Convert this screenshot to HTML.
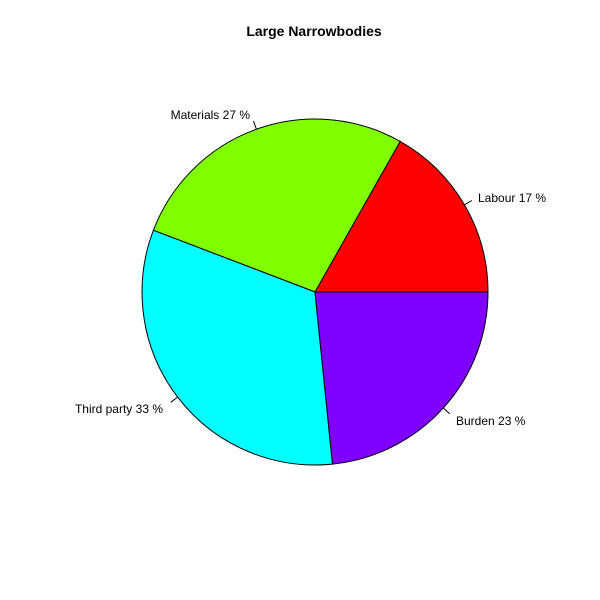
<!DOCTYPE html>
<html><head><meta charset="utf-8"><style>html,body{margin:0;padding:0;background:#fff}svg{display:block}</style></head>
<body>
<svg width="600" height="600" xmlns="http://www.w3.org/2000/svg" font-family="Liberation Sans, sans-serif">
<rect width="600" height="600" fill="#fff"/>
<text x="314" y="36" text-anchor="middle" font-weight="bold" font-size="14">Large Narrowbodies</text>
<g stroke="#000" stroke-width="1">
<path d="M315,292 L488,292 A173,173 0 0 0 400.2,141.4 Z" fill="#ff0000"/>
<path d="M315,292 L400.2,141.4 A173,173 0 0 0 153.4,230.3 Z" fill="#80ff00"/>
<path d="M315,292 L153.4,230.3 A173,173 0 0 0 332.5,464.1 Z" fill="#00ffff"/>
<path d="M315,292 L332.5,464.1 A173,173 0 0 0 488,292 Z" fill="#8000ff"/>
<line x1="464.4" y1="204.8" x2="471.9" y2="200.5"/>
<line x1="256.4" y1="129.2" x2="253.5" y2="121.1"/>
<line x1="177.6" y1="397.1" x2="170.7" y2="402.3"/>
<line x1="443.3" y1="408" x2="449.7" y2="413.8"/>
</g>
<g font-size="12" fill="#000">
<text x="478" y="202">Labour 17 %</text>
<text x="250" y="119" text-anchor="end">Materials 27 %</text>
<text x="163" y="413" text-anchor="end">Third party 33 %</text>
<text x="456" y="425">Burden 23 %</text>
</g>
</svg>
</body></html>
